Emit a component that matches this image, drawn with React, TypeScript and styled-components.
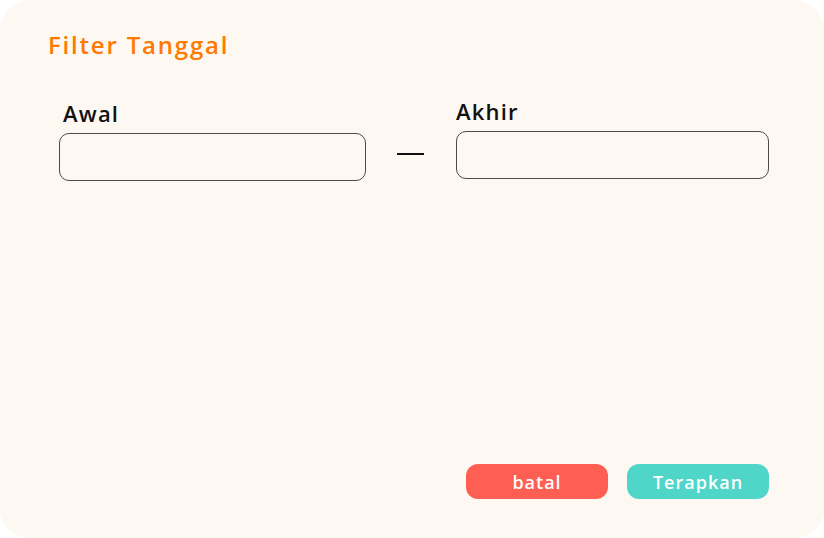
import React from 'react';
import styled, { createGlobalStyle } from 'styled-components';

const GlobalStyle = createGlobalStyle`
  html, body {
    margin: 0;
    padding: 0;
    background: #ffffff;
  }
  * {
    box-sizing: border-box;
  }
`;

const Card = styled.div`
  width: 824px;
  height: 538px;
  background: #fef8f2;
  border-radius: 30px;
  padding: 29px 55px 39px 48px;
  display: flex;
  flex-direction: column;
  font-family: 'Open Sans', 'Noto Sans', sans-serif;
`;

const Title = styled.h2`
  margin: 0;
  font-size: 24px;
  line-height: 32px;
  font-weight: 600;
  color: #ff7a00;
  letter-spacing: 1.8px;
`;

const FieldsRow = styled.div`
  display: flex;
  align-items: flex-start;
  margin-top: 36px;
  padding-left: 11px;
`;

const Field = styled.div<{ $width: number; $lift: number }>`
  width: ${({ $width }) => $width}px;
  display: flex;
  flex-direction: column;
  gap: 6px;
  margin-top: ${({ $lift }) => 2 - $lift}px;
`;

const Label = styled.label<{ $indent: number }>`
  font-size: 22px;
  line-height: 28px;
  font-weight: 600;
  color: #111111;
  letter-spacing: 1.2px;
  padding-left: ${({ $indent }) => $indent}px;
`;

const DateInput = styled.input`
  height: 48px;
  width: 100%;
  border: 1px solid #4a4a4a;
  border-radius: 10px;
  background: transparent;
  font-family: inherit;
  font-size: 16px;
  padding: 0 12px;
  outline: none;
`;

const Dash = styled.div`
  width: 27px;
  height: 2px;
  background: #111111;
  margin: 56px 32px 0 31px;
`;

const Actions = styled.div`
  margin-top: auto;
  display: flex;
  justify-content: flex-end;
  align-items: flex-end;
  gap: 19px;
`;

const ActionButton = styled.button<{ $color: string }>`
  width: 142px;
  height: 35px;
  border: none;
  border-radius: 12px;
  background: ${({ $color }) => $color};
  color: #ffffff;
  font-family: inherit;
  font-size: 18px;
  font-weight: 600;
  letter-spacing: 1px;
  cursor: pointer;
`;

const App = () => {
  return (
    <>
      <GlobalStyle />
      <Card>
        <Title>Filter Tanggal</Title>
        <FieldsRow>
          <Field $width={307} $lift={0}>
            <Label $indent={4}>Awal</Label>
            <DateInput type="text" />
          </Field>
          <Dash />
          <Field $width={313} $lift={2}>
            <Label $indent={0}>Akhir</Label>
            <DateInput type="text" />
          </Field>
        </FieldsRow>
        <Actions>
          <ActionButton $color="#ff5e52">batal</ActionButton>
          <ActionButton $color="#4fd6c9">Terapkan</ActionButton>
        </Actions>
      </Card>
    </>
  );
};

export default App;
